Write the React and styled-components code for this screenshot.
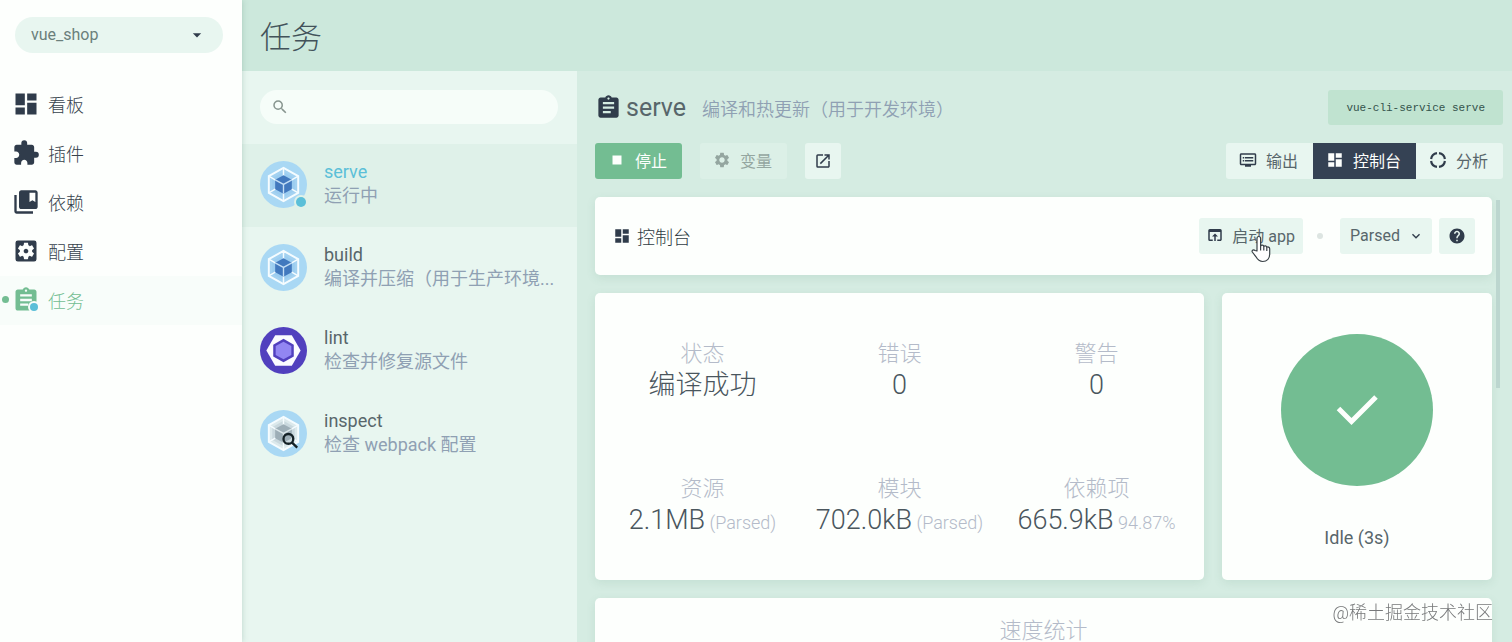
import React from 'react';
import styled, { createGlobalStyle, css } from 'styled-components';
import {
  MdDashboard, MdExtension, MdCollectionsBookmark, MdSettingsApplications, MdAssignment,
  MdArrowDropDown, MdSearch, MdStop, MdSettings, MdOpenInNew, MdDvr,
  MdOpenInBrowser, MdHelp, MdKeyboardArrowDown,
} from 'react-icons/md';

const c = {
  ink: '#303c4b',
  text: '#58666b',
  muted: '#8fa0b3',
  faint: '#b4bbc9',
  green: '#73bd92',
  blue: '#5bbfd8',
  white: '#fdfffd',
  pale: '#e8f6f0',
  main: '#d5ece2',
  header: '#cce8dc',
};

const GlobalStyle = createGlobalStyle`
  * { box-sizing: border-box; }
  body {
    margin: 0;
    font-family: Roboto, "Noto Sans CJK SC", sans-serif;
    font-size: 16px;
    font-weight: 400;
    color: ${c.text};
  }
  button, input, select { font: inherit; color: inherit; border: 0; margin: 0; }
  h1, h2, p, ul, dl, dd { margin: 0; padding: 0; font-weight: inherit; }
  svg { display: block; flex: none; }
`;

const Shell = styled.div`
  display: flex;
  height: 100vh;
  overflow: hidden;
  background: ${c.main};
`;

const Sidebar = styled.aside`
  width: 242px;
  flex: none;
  background: ${c.white};
  box-shadow: 0 0 6px rgba(60, 110, 90, 0.25);
  z-index: 1;
`;

const SelectBox = styled.label`
  position: relative;
  display: flex;
  align-items: center;
  svg { position: absolute; right: ${(p) => p.$inset}px; pointer-events: none; color: ${c.ink}; }
`;

const ProjectBox = styled(SelectBox)`
  margin: 17px 19px 27px 15px;
`;

const Select = styled.select`
  appearance: none;
  width: 100%;
  height: 36px;
  padding: 0 ${(p) => (p.$round ? 16 : 10)}px 2px;
  border-radius: ${(p) => (p.$round ? 18 : 3)}px;
  background: ${c.pale};
  color: ${(p) => (p.$round ? '#6b7f7b' : c.text)};
`;

const NavLink = styled.a`
  position: relative;
  display: flex;
  align-items: center;
  gap: 8px;
  height: 49px;
  padding: 0 0 2px 12px;
  font-size: 18px;
  font-weight: 300;
  text-decoration: none;
  color: ${(p) => (p.$active ? c.green : '#36424c')};
  background: ${(p) => (p.$active ? '#f8fdfa' : 'transparent')};
  svg { color: ${(p) => (p.$active ? c.green : c.ink)}; }
  ${(p) => p.$active && css`
    &::before {
      content: "";
      position: absolute;
      left: 2px;
      width: 7px;
      height: 7px;
      border-radius: 50%;
      background: ${c.green};
    }
  `}
`;

const IconBadge = styled.span`
  position: relative;
`;

const Dot = styled.i`
  position: absolute;
  right: ${(p) => p.$right}px;
  bottom: ${(p) => p.$bottom}px;
  width: ${(p) => p.$size}px;
  height: ${(p) => p.$size}px;
  border-radius: 50%;
  background: ${c.blue};
  box-shadow: 0 0 0 2px ${(p) => p.$ring};
`;

const Page = styled.div`
  flex: 1;
  min-width: 0;
  display: flex;
  flex-direction: column;
`;

const PageHeader = styled.header`
  height: 71px;
  flex: none;
  display: flex;
  align-items: center;
  padding: 0 0 3px 18px;
  background: ${c.header};
  h1 { font-size: 31px; font-weight: 300; color: #42525a; }
`;

const Columns = styled.div`
  flex: 1;
  min-height: 0;
  display: flex;
`;

const TaskList = styled.section`
  width: 335px;
  flex: none;
  background: ${c.pale};
`;

const SearchBox = styled.label`
  display: flex;
  align-items: center;
  gap: 8px;
  height: 34px;
  margin: 19px 19px 20px 18px;
  padding: 0 11px;
  border-radius: 17px;
  background: #f6fdf9;
  color: #87958f;
  input { flex: 1; min-width: 0; background: transparent; outline: 0; }
`;

const TaskLink = styled.a`
  display: flex;
  align-items: center;
  gap: 17px;
  height: 83px;
  padding: 0 22px 3px 18px;
  text-decoration: none;
  font-size: 18px;
  line-height: 24px;
  color: ${c.muted};
  background: ${(p) => (p.$active ? '#dff1e9' : 'transparent')};
`;

const TaskText = styled.div`
  min-width: 0;
  white-space: nowrap;
  strong { display: block; font-weight: 400; color: ${(p) => (p.$active ? c.blue : c.text)}; }
`;

const Main = styled.main`
  flex: 1;
  min-width: 0;
  padding: 19px 9px 0 18px;
`;

const Bar = styled.div`
  display: flex;
  align-items: center;
  justify-content: space-between;
  margin-bottom: 18px;
`;

const Cluster = styled.div`
  display: flex;
  align-items: center;
  gap: ${(p) => p.$gap}px;
`;

const TaskTitle = styled.h2`
  display: flex;
  align-items: center;
  gap: 4px;
  font-size: 25px;
  color: ${c.text};
  svg { color: ${c.ink}; }
`;

const Description = styled.span`
  font-size: 18px;
  font-weight: 350;
  color: ${c.muted};
`;

const Command = styled.code`
  height: 35px;
  padding: 0 18px;
  border-radius: 3px;
  background: #c0e3d0;
  font: 11px/37px "Liberation Mono", monospace;
  color: #33524b;
`;

const Button = styled.button`
  display: flex;
  align-items: center;
  justify-content: center;
  gap: 9px;
  height: 36px;
  padding: 0 15px 2px 13px;
  border-radius: ${(p) => (p.$flat ? 0 : 3)}px;
  background: ${c.pale};
  white-space: nowrap;
  svg { color: ${c.ink}; }
  ${(p) => p.$primary && css`
    background: ${c.green};
    &, svg { color: ${c.white}; }
  `}
  ${(p) => p.$selected && css`
    background: #354254;
    &, svg { color: ${c.white}; }
  `}
  &:disabled {
    background: #dcf0e7;
    &, svg { color: #94a6a0; }
  }
`;

const IconButton = styled(Button)`
  width: 36px;
  padding: 0;
`;

const LaunchButton = styled(Button)`
  gap: 8px;
  padding: 0 8px 2px 7px;
`;

const TabGroup = styled.div`
  display: flex;
  border-radius: 3px;
  overflow: hidden;
`;

const Scroller = styled.div`
  position: relative;
  padding-right: 11px;
`;

const ScrollThumb = styled.i`
  position: absolute;
  right: 3px;
  top: 3px;
  width: 4px;
  height: 188px;
  background: #bcd6cf;
`;

const Card = styled.section`
  border-radius: 5px;
  background: ${c.white};
  box-shadow: 0 3px 10px rgba(70, 130, 105, 0.12);
`;

const DashboardHead = styled(Card)`
  display: flex;
  align-items: center;
  justify-content: space-between;
  height: 78px;
  margin-bottom: 18px;
  padding: 0 17px 0 18px;
`;

const DashboardTitle = styled.h2`
  display: flex;
  align-items: center;
  gap: 6px;
  font-size: 18px;
  font-weight: 300;
  color: #303c44;
  svg { color: ${c.ink}; }
`;

const Separator = styled.i`
  width: 6px;
  height: 6px;
  margin: 0 17px 0 14px;
  border-radius: 50%;
  background: #dde5e2;
`;

const ModeBox = styled(SelectBox)`
  width: 92px;
  margin-right: 7px;
`;

const LaunchWrap = styled.div`
  position: relative;
`;

const Pointer = styled.svg`
  position: absolute;
  left: 52px;
  top: 17px;
`;

const Widgets = styled.div`
  display: grid;
  grid-template-columns: 1fr 270px;
  gap: 18px;
  margin-bottom: 18px;
`;

const Stats = styled(Card)`
  height: 287px;
`;

const StatGrid = styled.dl`
  display: grid;
  grid-template-columns: repeat(3, 1fr);
  grid-template-rows: repeat(2, 1fr);
  row-gap: 2px;
  height: 100%;
  padding: 9px 9px 7px;
`;

const Stat = styled.div`
  display: flex;
  flex-direction: column;
  align-items: center;
  justify-content: center;
  font-weight: 300;
  white-space: nowrap;
  dt { font-size: 22px; line-height: 31px; color: ${c.faint}; }
  dd { font-size: 27px; line-height: 32px; color: #4a565d; }
  small { font-size: 18px; color: ${c.faint}; }
`;

const StatusCard = styled(Card)`
  display: flex;
  flex-direction: column;
  align-items: center;
  justify-content: center;
  gap: 40px;
  padding-top: 10px;
  font-size: 18px;
  line-height: 24px;
`;

const StatusDisc = styled.div`
  display: grid;
  place-items: center;
  width: 152px;
  height: 152px;
  border-radius: 50%;
  background: ${c.green};
  color: ${c.white};
`;

const SpeedCard = styled(Card)`
  height: 200px;
  padding-top: 17px;
  text-align: center;
  h2 { font-size: 22px; line-height: 32px; font-weight: 300; color: ${c.faint}; }
`;

const Watermark = styled.div`
  position: fixed;
  right: 19px;
  bottom: 16px;
  z-index: 2;
  font-size: 18px;
  line-height: 26px;
  font-weight: 300;
  color: #77797a;
`;

const WebpackLogo = ({ gray }) => (
  <svg width="47" height="47" viewBox="0 0 48 48" aria-hidden="true">
    <circle cx="24" cy="24" r="24" fill="#a9d8f4" />
    <path d="M24 7 39 15.5v17L24 41 9 32.5v-17Z" fill={gray ? '#dce9ec' : '#a4d2f1'} stroke="#f5fcff" strokeWidth="2" />
    <path d="m24 11 11.5 6.6v12.8L24 37l-11.5-6.6V17.6Z" fill={gray ? '#c9d8de' : '#9ccdf0'} />
    <path d="M24 7v8m15 .5-7 4M39 32.500l-7-4M24 41v-8M9 32.500l7-4M9 15.500l7 4" stroke="#f5fcff" strokeWidth="1.500" />
    <path d="m24 14.500 8.500 4.700v9.600L24 33.500l-8.500-4.700v-9.600Z" fill={gray ? '#9daeb7' : '#4279be'} />
    <path d="m15.500 19.200 8.500 4.700 8.500-4.700M24 23.900v9.600" fill="none" stroke={gray ? '#dce7eb' : '#c3def5'} strokeWidth="1.400" />
    {gray && (
      <g fill="none" stroke="#142127" strokeWidth="2.400">
        <circle cx="29" cy="29.500" r="5" />
        <path d="m32.500 33 5.500 5.500" />
      </g>
    )}
  </svg>
);

const EslintLogo = () => (
  <svg width="47" height="47" viewBox="0 0 48 48" aria-hidden="true">
    <circle cx="24" cy="24" r="24" fill="#5140be" />
    <path d="M15.500 8.500h17L41.500 24l-9 15.500h-17L6.500 24Z" fill="#fbfbff" />
    <path d="m24 12 10.500 6v12L24 36l-10.500-6V18Z" fill="#5140be" />
    <path d="m24 15 8 4.500v9L24 33l-8-4.500v-9Z" fill="#9286f2" />
  </svg>
);

const RingIcon = () => (
  <svg width="18" height="18" viewBox="0 0 18 18" fill="none" stroke="currentColor" strokeWidth="2.200" aria-hidden="true">
    <path d="M10 2.080a7 7 0 0 1 5.920 5.920M15.920 10a7 7 0 0 1-5.920 5.920M8 15.920a7 7 0 0 1-5.920-5.920M2.080 8a7 7 0 0 1 5.920-5.920" />
  </svg>
);

const CheckIcon = () => (
  <svg width="56" height="56" viewBox="0 0 56 56" fill="none" stroke="currentColor" strokeWidth="5" aria-hidden="true">
    <path d="M9.500 26.500 22.500 39.500 47 15" />
  </svg>
);

const HandPointer = () => (
  <Pointer width="20" height="28" viewBox="0 0 20 28" aria-hidden="true">
    <path
      d="M6 16V3.500C6 .8 9.600.8 9.600 3.500V11c.6-1.500 3-1.200 3.200.5.800-1.200 2.800-.7 3 .8 1-.8 2.900-.2 2.900 1.500V19c0 4.500-2.500 7.500-7 7.500-4 0-5.200-2-6.700-4.700L1.300 17c-.8-1.600 1.300-2.900 2.700-1.500Z"
      fill="#fff" stroke="#3a4247" strokeWidth="1.200" strokeLinejoin="round"
    />
    <path d="M9.600 11v4.500M12.800 11.500v4M15.800 12.500v3.500" stroke="#3a4247" strokeWidth="1.200" />
  </Pointer>
);

const navItems = [
  { label: '看板', Icon: MdDashboard },
  { label: '插件', Icon: MdExtension },
  { label: '依赖', Icon: MdCollectionsBookmark },
  { label: '配置', Icon: MdSettingsApplications },
  { label: '任务', Icon: MdAssignment, active: true },
];

const tasks = [
  { name: 'serve', text: '运行中', logo: <WebpackLogo />, active: true },
  { name: 'build', text: '编译并压缩（用于生产环境...', logo: <WebpackLogo /> },
  { name: 'lint', text: '检查并修复源文件', logo: <EslintLogo /> },
  { name: 'inspect', text: '检查 webpack 配置', logo: <WebpackLogo gray /> },
];

const stats = [
  { label: '状态', value: '编译成功' },
  { label: '错误', value: '0' },
  { label: '警告', value: '0' },
  { label: '资源', value: '2.1MB', note: '(Parsed)' },
  { label: '模块', value: '702.0kB', note: '(Parsed)' },
  { label: '依赖项', value: '665.9kB', note: '94.87%' },
];

export default function App() {
  return (
    <>
      <GlobalStyle />
      <Shell>
        <Sidebar>
          <ProjectBox $inset={16}>
            <Select $round aria-label="项目" defaultValue="vue_shop">
              <option>vue_shop</option>
            </Select>
            <MdArrowDropDown size={20} />
          </ProjectBox>
          <nav>
            {navItems.map(({ label, Icon, active }) => (
              <NavLink key={label} href="#" $active={active}>
                <IconBadge>
                  <Icon size={28} />
                  {active && <Dot $size={8} $right={2} $bottom={3} $ring="#f8fdfa" />}
                </IconBadge>
                {label}
              </NavLink>
            ))}
          </nav>
        </Sidebar>
        <Page>
          <PageHeader><h1>任务</h1></PageHeader>
          <Columns>
            <TaskList>
              <SearchBox>
                <MdSearch size={18} />
                <input type="text" aria-label="搜索" />
              </SearchBox>
              {tasks.map((t) => (
                <TaskLink key={t.name} href="#" $active={t.active}>
                  <IconBadge>
                    {t.logo}
                    {t.active && <Dot $size={10} $right={1} $bottom={1} $ring="#dff1e9" />}
                  </IconBadge>
                  <TaskText $active={t.active}>
                    <strong>{t.name}</strong>
                    <p>{t.text}</p>
                  </TaskText>
                </TaskLink>
              ))}
            </TaskList>
            <Main>
              <Bar>
                <Cluster $gap={16}>
                  <TaskTitle><MdAssignment size={27} />serve</TaskTitle>
                  <Description>编译和热更新（用于开发环境）</Description>
                </Cluster>
                <Command>vue-cli-service serve</Command>
              </Bar>
              <Bar>
                <Cluster $gap={18}>
                  <Button $primary><MdStop size={18} />停止</Button>
                  <Button disabled><MdSettings size={18} />变量</Button>
                  <IconButton aria-label="打开"><MdOpenInNew size={18} /></IconButton>
                </Cluster>
                <TabGroup>
                  <Button $flat><MdDvr size={18} />输出</Button>
                  <Button $flat $selected><MdDashboard size={18} />控制台</Button>
                  <Button $flat><RingIcon />分析</Button>
                </TabGroup>
              </Bar>
              <Scroller>
                <DashboardHead>
                  <DashboardTitle><MdDashboard size={18} />控制台</DashboardTitle>
                  <Cluster $gap={0}>
                    <LaunchWrap>
                      <LaunchButton><MdOpenInBrowser size={18} />启动 app</LaunchButton>
                      <HandPointer />
                    </LaunchWrap>
                    <Separator />
                    <ModeBox $inset={8}>
                      <Select aria-label="大小" defaultValue="Parsed">
                        <option>Parsed</option>
                      </Select>
                      <MdKeyboardArrowDown size={16} />
                    </ModeBox>
                    <IconButton aria-label="帮助"><MdHelp size={18} /></IconButton>
                  </Cluster>
                </DashboardHead>
                <Widgets>
                  <Stats>
                    <StatGrid>
                      {stats.map((s) => (
                        <Stat key={s.label}>
                          <dt>{s.label}</dt>
                          <dd>{s.value}{s.note && <small> {s.note}</small>}</dd>
                        </Stat>
                      ))}
                    </StatGrid>
                  </Stats>
                  <StatusCard>
                    <StatusDisc><CheckIcon /></StatusDisc>
                    <p>Idle (3s)</p>
                  </StatusCard>
                </Widgets>
                <SpeedCard><h2>速度统计</h2></SpeedCard>
                <ScrollThumb />
              </Scroller>
            </Main>
          </Columns>
        </Page>
        <Watermark>@稀土掘金技术社区</Watermark>
      </Shell>
    </>
  );
}
